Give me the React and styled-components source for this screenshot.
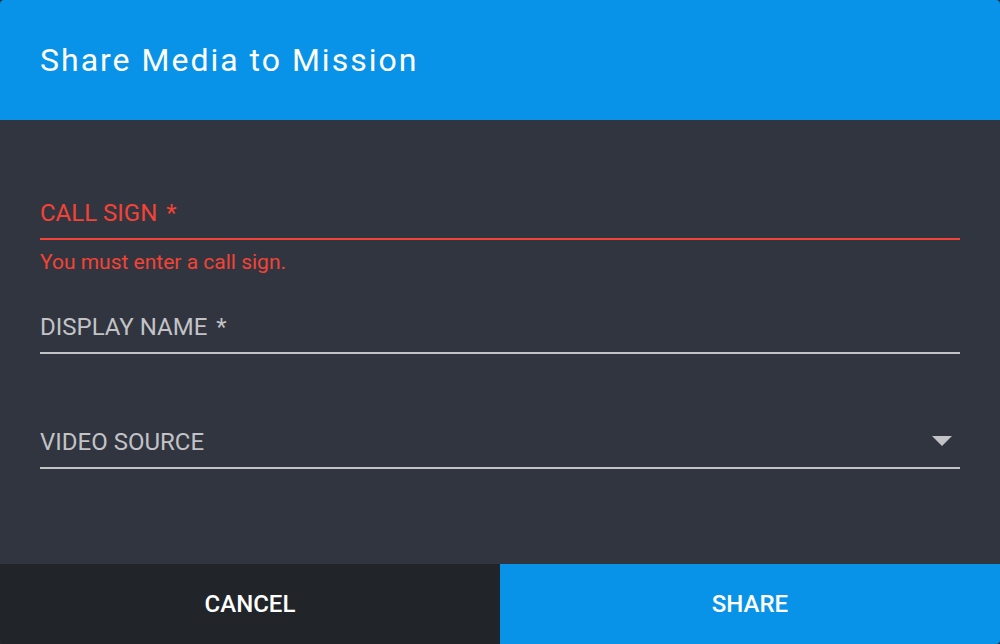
import React from 'react';
import styled, { createGlobalStyle } from 'styled-components';

const GlobalStyle = createGlobalStyle`
  html, body {
    margin: 0;
    padding: 0;
    background: #25272c;
  }
  body {
    font-family: Roboto, "Noto Sans", "Liberation Sans", sans-serif;
  }
`;

const Dialog = styled.div`
  width: 1000px;
  height: 644px;
  display: flex;
  flex-direction: column;
  border-radius: 4px;
  overflow: hidden;
  background: #31353f;
`;

const Header = styled.div`
  height: 120px;
  flex: none;
  display: flex;
  align-items: center;
  padding: 0 40px;
  background: #0893e8;
`;

const Title = styled.h1`
  margin: 0;
  font-size: 32px;
  font-weight: 400;
  letter-spacing: 2px;
  color: #ffffff;
`;

const Content = styled.div`
  flex: 1;
  padding: 79px 40px 0;
  display: flex;
  flex-direction: column;
`;

const Field = styled.div`
  margin-top: ${(p) => p.$gap || 0}px;
`;

const InputRow = styled.div`
  display: flex;
  justify-content: space-between;
  align-items: flex-start;
  padding-bottom: 11px;
  border-bottom: 2px solid ${(p) => (p.$error ? '#f44336' : '#c2c3c6')};
`;

const Label = styled.span`
  font-size: 24px;
  line-height: 28px;
  color: ${(p) => (p.$error ? '#f44336' : '#c2c3c6')};
`;

const Asterisk = styled.span`
  margin-left: 3px;
`;

const HelperText = styled.div`
  margin-top: 10px;
  font-size: 21px;
  line-height: 24px;
  color: #f44336;
`;

const Caret = styled.svg`
  margin: 8px 8px 0 0;
  flex: none;
`;

const Footer = styled.div`
  height: 80px;
  flex: none;
  display: flex;
`;

const Button = styled.button`
  flex: 1;
  border: none;
  margin: 0;
  padding: 0;
  font-family: inherit;
  font-size: 24px;
  font-weight: 500;
  color: #ffffff;
  background: ${(p) => (p.$primary ? '#0893e8' : '#212429')};
  cursor: pointer;
`;

function App() {
  return (
    <>
      <GlobalStyle />
      <Dialog>
        <Header>
          <Title>Share Media to Mission</Title>
        </Header>
        <Content>
          <Field>
            <InputRow $error>
              <Label $error>
                CALL SIGN<Asterisk> *</Asterisk>
              </Label>
            </InputRow>
            <HelperText>You must enter a call sign.</HelperText>
          </Field>
          <Field $gap={39}>
            <InputRow>
              <Label>
                DISPLAY NAME<Asterisk> *</Asterisk>
              </Label>
            </InputRow>
          </Field>
          <Field $gap={74}>
            <InputRow>
              <Label>VIDEO SOURCE</Label>
              <Caret width="20" height="10" viewBox="0 0 20 10">
                <path d="M0 0 L20 0 L10 10 Z" fill="#c2c3c6" />
              </Caret>
            </InputRow>
          </Field>
        </Content>
        <Footer>
          <Button>CANCEL</Button>
          <Button $primary>SHARE</Button>
        </Footer>
      </Dialog>
    </>
  );
}

export default App;
